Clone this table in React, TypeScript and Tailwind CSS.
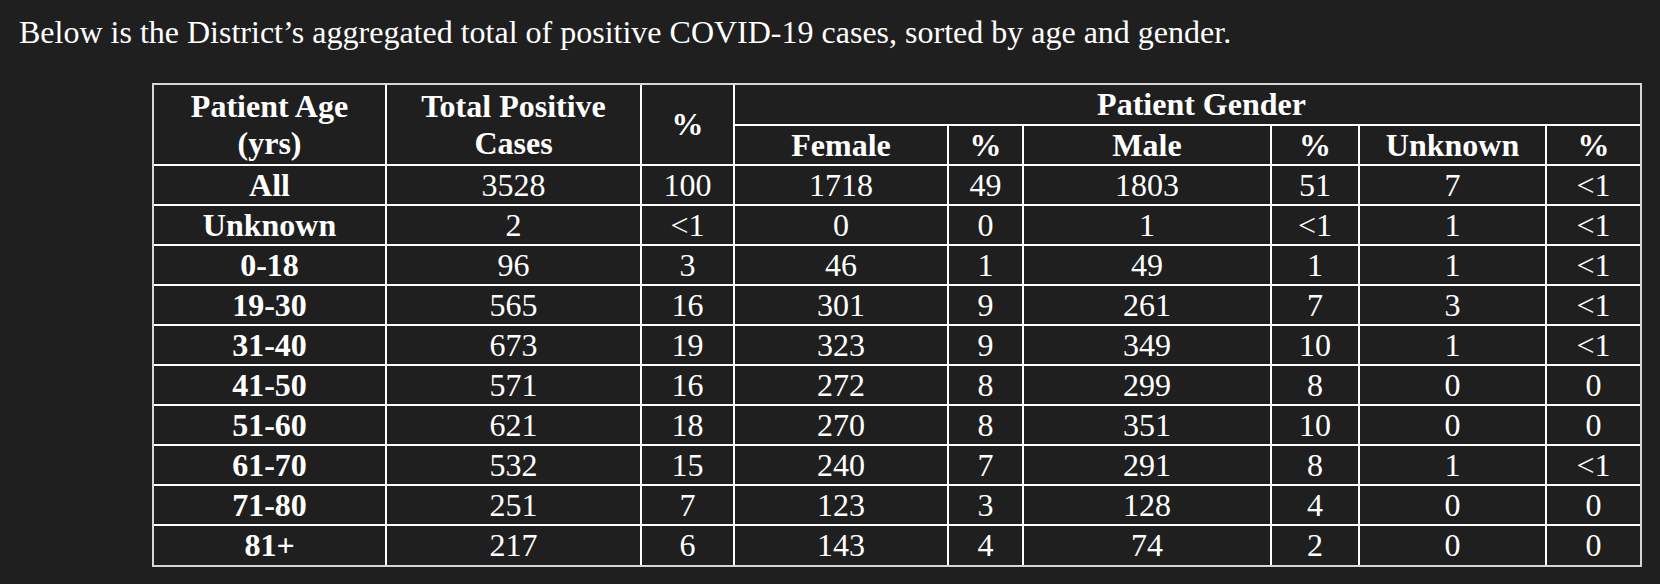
import React from 'react'

type Row = {
  age: string
  total: string
  pct: string
  female: string
  femalePct: string
  male: string
  malePct: string
  unknown: string
  unknownPct: string
}

const rows: Row[] = [
  { age: 'All', total: '3528', pct: '100', female: '1718', femalePct: '49', male: '1803', malePct: '51', unknown: '7', unknownPct: '<1' },
  { age: 'Unknown', total: '2', pct: '<1', female: '0', femalePct: '0', male: '1', malePct: '<1', unknown: '1', unknownPct: '<1' },
  { age: '0-18', total: '96', pct: '3', female: '46', femalePct: '1', male: '49', malePct: '1', unknown: '1', unknownPct: '<1' },
  { age: '19-30', total: '565', pct: '16', female: '301', femalePct: '9', male: '261', malePct: '7', unknown: '3', unknownPct: '<1' },
  { age: '31-40', total: '673', pct: '19', female: '323', femalePct: '9', male: '349', malePct: '10', unknown: '1', unknownPct: '<1' },
  { age: '41-50', total: '571', pct: '16', female: '272', femalePct: '8', male: '299', malePct: '8', unknown: '0', unknownPct: '0' },
  { age: '51-60', total: '621', pct: '18', female: '270', femalePct: '8', male: '351', malePct: '10', unknown: '0', unknownPct: '0' },
  { age: '61-70', total: '532', pct: '15', female: '240', femalePct: '7', male: '291', malePct: '8', unknown: '1', unknownPct: '<1' },
  { age: '71-80', total: '251', pct: '7', female: '123', femalePct: '3', male: '128', malePct: '4', unknown: '0', unknownPct: '0' },
  { age: '81+', total: '217', pct: '6', female: '143', femalePct: '4', male: '74', malePct: '2', unknown: '0', unknownPct: '0' },
]

const cell = 'border-2 border-white p-0 text-center align-middle'

export default function App() {
  return (
    <div className="min-h-[584px] w-full bg-[#1f1f1f] font-['Liberation_Serif',serif] text-white">
      <p className="pl-[19px] pt-[15px] text-[32px] leading-[35px]">
        Below is the District’s aggregated total of positive COVID-19 cases, sorted by age and gender.
      </p>

      <div className="ml-[152px] mt-[33px] inline-block border-2 border-[#d6d6d6]">
        <table className="table-fixed border-collapse border-hidden text-[32px] leading-[37px]">
          <colgroup>
            <col className="w-[232px]" />
            <col className="w-[255px]" />
            <col className="w-[93px]" />
            <col className="w-[214px]" />
            <col className="w-[75px]" />
            <col className="w-[248px]" />
            <col className="w-[88px]" />
            <col className="w-[187px]" />
            <col className="w-[94px]" />
          </colgroup>
          <thead>
            <tr className="h-[40px]">
              <th rowSpan={2} className={`${cell} font-bold`}>
                Patient Age
                <br />
                (yrs)
              </th>
              <th rowSpan={2} className={`${cell} font-bold`}>
                Total Positive
                <br />
                Cases
              </th>
              <th rowSpan={2} className={`${cell} font-bold`}>
                %
              </th>
              <th colSpan={6} className={`${cell} pl-[28px] font-bold`}>
                Patient Gender
              </th>
            </tr>
            <tr className="h-[40px]">
              <th className={`${cell} font-bold`}>Female</th>
              <th className={`${cell} font-bold`}>%</th>
              <th className={`${cell} font-bold`}>Male</th>
              <th className={`${cell} font-bold`}>%</th>
              <th className={`${cell} font-bold`}>Unknown</th>
              <th className={`${cell} font-bold`}>%</th>
            </tr>
          </thead>
          <tbody>
            {rows.map((r) => (
              <tr key={r.age} className="h-[40px]">
                <td className={`${cell} font-bold`}>{r.age}</td>
                <td className={cell}>{r.total}</td>
                <td className={cell}>{r.pct}</td>
                <td className={cell}>{r.female}</td>
                <td className={cell}>{r.femalePct}</td>
                <td className={cell}>{r.male}</td>
                <td className={cell}>{r.malePct}</td>
                <td className={cell}>{r.unknown}</td>
                <td className={cell}>{r.unknownPct}</td>
              </tr>
            ))}
          </tbody>
        </table>
      </div>
    </div>
  )
}
